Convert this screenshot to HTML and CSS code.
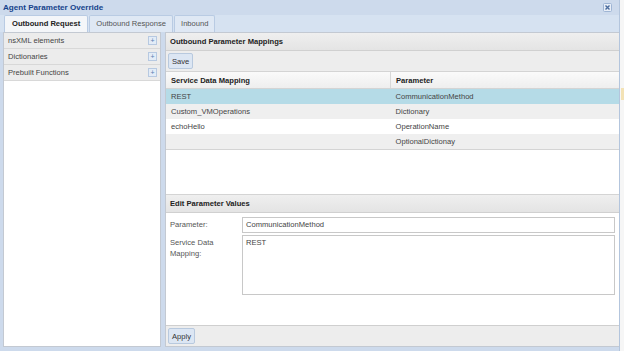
FILE: index.html
```html
<!DOCTYPE html>
<html lang="en">
<head>
    <meta charset="UTF-8">
    <title>Agent Parameter Override</title>
    <link rel="stylesheet" href="styles.css">
</head>
<body>
    <div class="page">
        <div class="window">
            <div class="titlebar">
                <span class="title">Agent Parameter Override</span>
                <span class="close">
                    <svg width="9" height="9" viewBox="0 0 9 9"><rect x="0.5" y="0.5" width="8" height="8" rx="1" fill="#e8eef7" stroke="#9fb5d4"/><path d="M2.5 2.5 L6.5 6.5 M6.5 2.5 L2.5 6.5" stroke="#4a6b9c" stroke-width="1.4"/></svg>
                </span>
            </div>
            <div class="tabs">
                <div class="tab active">Outbound Request</div>
                <div class="tab">Outbound Response</div>
                <div class="tab">Inbound</div>
            </div>
            <div class="body">
                <div class="sidebar">
                    <div class="acc-row">nsXML elements <span class="plus">+</span></div>
                    <div class="acc-row">Dictionaries <span class="plus">+</span></div>
                    <div class="acc-row">Prebuilt Functions <span class="plus">+</span></div>
                </div>
                <div class="splitter"></div>
                <div class="main">
                    <div class="mappings">
                        <div class="panel-head">Outbound Parameter Mappings</div>
                        <div class="toolbar"><button class="btn">Save</button></div>
                        <table class="grid">
                            <thead>
                                <tr><th class="col1">Service Data Mapping</th><th>Parameter</th></tr>
                            </thead>
                            <tbody>
                                <tr class="selected"><td>REST</td><td>CommunicationMethod</td></tr>
                                <tr class="alt"><td>Custom_VMOperations</td><td>Dictionary</td></tr>
                                <tr><td>echoHello</td><td>OperationName</td></tr>
                                <tr class="alt"><td></td><td>OptionalDictionay</td></tr>
                            </tbody>
                        </table>
                    </div>
                    <div class="edit">
                        <div class="panel-head">Edit Parameter Values</div>
                        <div class="form">
                            <div class="field">
                                <label>Parameter:</label>
                                <div class="input">CommunicationMethod</div>
                            </div>
                            <div class="field">
                                <label>Service Data<br>Mapping:</label>
                                <div class="input textarea">REST</div>
                            </div>
                        </div>
                        <div class="toolbar bottom"><button class="btn">Apply</button></div>
                    </div>
                </div>
            </div>
        </div>
        <div class="outside">
            <div class="outside-mark"></div>
        </div>
    </div>
</body>
</html>
```
FILE: styles.css
```css
body {
    margin: 0;
    font-family: "Liberation Sans", Arial, sans-serif;
    font-size: 7.6px;
    color: #333;
    background-color: #f6f6f6;
}
.page {
    display: flex;
    width: 624px;
    height: 351px;
}
.window {
    width: 619px;
    height: 351px;
    background-color: #cddaec;
    display: flex;
    flex-direction: column;
}
.titlebar {
    height: 15px;
    display: flex;
    align-items: center;
    justify-content: space-between;
    padding: 0 7px 0 3px;
}
.title {
    font-weight: bold;
    color: #15428b;
    font-size: 8.1px;
}
.close {
    display: flex;
}
.close svg {
    display: block;
}
.tabs {
    height: 17px;
    display: flex;
    align-items: flex-end;
    padding-left: 4px;
    gap: 1px;
    background-color: #d6e2f1;
}
.tab {
    height: 16px;
    line-height: 16px;
    padding: 0 6px;
    border: 1px solid #b9cbe3;
    border-bottom: none;
    background-color: #dfe8f4;
    color: #555;
    border-radius: 2px 2px 0 0;
}
.tab.active {
    background-color: #f4f6f9;
    font-weight: bold;
    color: #222;
    padding: 0 7px;
}
.body {
    flex: 1;
    display: flex;
    padding: 0 0 4px 3px;
}
.sidebar {
    width: 156px;
    background-color: #fff;
    border: 1px solid #c3c9d2;
}
.acc-row {
    height: 15px;
    display: flex;
    align-items: center;
    justify-content: space-between;
    padding: 0 3px 0 4px;
    background-color: #ececec;
    border-bottom: 1px solid #d8d8d8;
    color: #444;
}
.plus {
    width: 7px;
    height: 7px;
    line-height: 7px;
    text-align: center;
    font-size: 7px;
    color: #5a7db0;
    background-color: #e3ecf7;
    border: 1px solid #b7c9e1;
}
.splitter {
    width: 4px;
}
.main {
    flex: 1;
    display: flex;
    flex-direction: column;
    background-color: #fff;
    border: 1px solid #c3c9d2;
    border-right: none;
}
.mappings {
    height: 161px;
    display: flex;
    flex-direction: column;
}
.panel-head {
    height: 17px;
    line-height: 17px;
    padding-left: 4px;
    font-weight: bold;
    color: #222;
    background: linear-gradient(#efefef, #e4e4e4);
    border-bottom: 1px solid #d0d0d0;
}
.toolbar {
    height: 20px;
    display: flex;
    align-items: center;
    padding-left: 2px;
    background-color: #ededed;
    border-bottom: 1px solid #d4d4d4;
}
.btn {
    font-family: inherit;
    font-size: 7.6px;
    color: #333;
    height: 16px;
    padding: 0 3px;
    border: 1px solid #b8c9de;
    background-color: #dce6f3;
    border-radius: 2px;
}
.grid {
    width: 100%;
    border-collapse: collapse;
    border-bottom: 1px solid #d4d4d4;
}
.grid th {
    height: 16px;
    text-align: left;
    padding: 0 5px;
    font-weight: bold;
    color: #222;
    background: linear-gradient(#fafafa, #eeeeee);
    border-bottom: 1px solid #d4d4d4;
}
.grid th.col1 {
    width: 214px;
    border-right: 1px solid #d8d8d8;
}
.grid td {
    height: 15px;
    padding: 0 5px;
    color: #444;
}
.grid tr.alt td {
    background-color: #efefef;
}
.grid tr.selected td {
    background-color: #b5dbe7;
}
.edit {
    flex: 1;
    display: flex;
    flex-direction: column;
    border-top: 1px solid #d4d4d4;
}
.form {
    flex: 1;
    padding: 4px 4px 0 4px;
}
.field {
    display: flex;
    margin-bottom: 2px;
}
.field label {
    width: 72px;
    padding-top: 2px;
    color: #555;
    line-height: 11px;
}
.input {
    flex: 1;
    height: 14px;
    line-height: 14px;
    padding: 0 3px;
    border: 1px solid #c8c8c8;
    color: #444;
}
.input.textarea {
    height: 56px;
    line-height: 10px;
    padding-top: 2px;
}
.toolbar.bottom {
    border-top: 1px solid #cfcfcf;
    border-bottom: none;
    height: 20px;
}
.outside {
    flex: 1;
    border-left: 1px solid #b3c5dd;
    position: relative;
}
.outside-mark {
    position: absolute;
    top: 88px;
    left: 1px;
    width: 3px;
    height: 12px;
    background-color: #f3e2b5;
}
```
